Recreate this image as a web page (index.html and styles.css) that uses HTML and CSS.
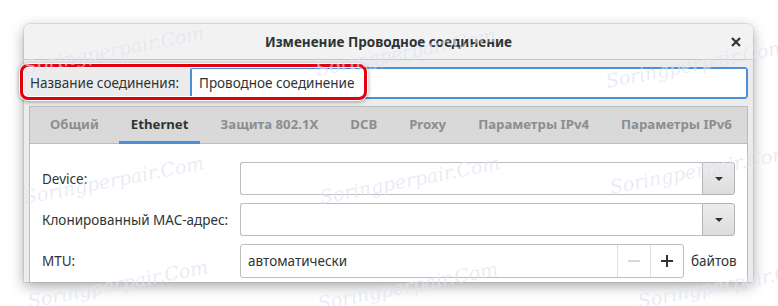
FILE: index.html
```html
<!DOCTYPE html>
<html lang="ru">
<head>
    <meta charset="UTF-8">
    <title>Изменение Проводное соединение</title>
    <link rel="stylesheet" href="styles.css">
</head>
<body>
    <div class="stage">
        <div class="window">
            <div class="titlebar">
                <span class="title">Изменение Проводное соединение</span>
                <span class="close">
                    <svg width="10" height="10" viewBox="0 0 10 10"><path d="M1 1L9 9M9 1L1 9" stroke="#2e3436" stroke-width="2.2"/></svg>
                </span>
            </div>
            <div class="name-row">
                <label class="name-label">Название соединения:</label>
                <div class="name-input">Проводное соединение</div>
            </div>
            <div class="notebook">
                <div class="tabs">
                    <span class="tab">Общий</span>
                    <span class="tab active">Ethernet</span>
                    <span class="tab">Защита 802.1X</span>
                    <span class="tab">DCB</span>
                    <span class="tab">Proxy</span>
                    <span class="tab">Параметры IPv4</span>
                    <span class="tab">Параметры IPv6</span>
                </div>
                <div class="page">
                    <div class="row">
                        <span class="label">Device:</span>
                        <div class="combo">
                            <div class="combo-entry"></div>
                            <div class="combo-btn"><span class="arrow"></span></div>
                        </div>
                    </div>
                    <div class="row">
                        <span class="label">Клонированный MAC-адрес:</span>
                        <div class="combo">
                            <div class="combo-entry"></div>
                            <div class="combo-btn"><span class="arrow"></span></div>
                        </div>
                    </div>
                    <div class="row">
                        <span class="label">MTU:</span>
                        <div class="mtu">
                            <div class="spin">
                                <span class="spin-text">автоматически</span>
                                <span class="spin-btn minus">
                                    <svg width="12" height="12" viewBox="0 0 12 12"><path d="M0 6H12" stroke="#d0d0d0" stroke-width="1.6"/></svg>
                                </span>
                                <span class="spin-btn plus">
                                    <svg width="12" height="12" viewBox="0 0 12 12"><path d="M0 6H12M6 0V12" stroke="#2e3436" stroke-width="2"/></svg>
                                </span>
                            </div>
                            <span class="unit">байтов</span>
                        </div>
                    </div>
                </div>
            </div>
        </div>

        <div class="highlight"></div>

        <span class="wm" style="left: 26px; top: 56px;">Soringperpair.Com</span>
        <span class="wm" style="left: 318px; top: 58px;">Soringperpair.Com</span>
        <span class="wm" style="left: 608px; top: 70px;">Soringperpair.Com</span>
        <span class="wm" style="left: 26px; top: 186px;">Soringperpair.Com</span>
        <span class="wm" style="left: 322px; top: 186px;">Soringperpair.Com</span>
        <span class="wm" style="left: 612px; top: 176px;">Soringperpair.Com</span>
        <span class="wm" style="left: 30px; top: 290px;">Soringperpair.Com</span>
        <span class="wm" style="left: 320px; top: 292px;">Soringperpair.Com</span>
        <span class="wm" style="left: 640px; top: 290px;">Soringperpair.Com</span>
    </div>
</body>
</html>
```

FILE: styles.css
```css
body {
    margin: 0;
    background: #ffffff;
    font-family: "Noto Sans", "Open Sans", sans-serif;
    font-size: 13.5px;
    color: #2e3436;
}

.stage {
    position: relative;
    width: 778px;
    height: 306px;
    overflow: hidden;
    padding: 24px 0 0 24px;
    box-sizing: border-box;
}

.window {
    width: 729px;
    height: 258px;
    background: #ececec;
    box-shadow: 0 4px 14px rgba(0, 0, 0, 0.35), 0 0 0 1px rgba(0, 0, 0, 0.08);
    border-radius: 6px 6px 0 0;
    overflow: hidden;
    display: flex;
    flex-direction: column;
}

.titlebar {
    height: 35px;
    flex: none;
    background: #f2f2f2;
    border-bottom: 1px solid #c4c4c4;
    display: flex;
    align-items: center;
    justify-content: center;
    position: relative;
}

.title {
    font-weight: bold;
    margin-top: 1px;
}

.close {
    position: absolute;
    right: 12px;
    top: 13px;
    display: flex;
}

.name-row {
    display: flex;
    align-items: center;
    padding: 7px 5px 0 6px;
    height: 32px;
    flex: none;
}

.name-label {
    width: 160px;
    flex: none;
}

.name-input {
    flex: 1;
    height: 30px;
    line-height: 30px;
    border: 1px solid #4a90d9;
    box-shadow: inset 0 0 0 1px #4a90d9;
    border-radius: 3px;
    background: #ffffff;
    padding-left: 8px;
}

.notebook {
    margin: 7px 5px 0 5px;
    border: 1px solid #bcbcbc;
    border-bottom: none;
    flex: 1;
    display: flex;
    flex-direction: column;
    background: #ffffff;
}

.tabs {
    height: 36px;
    flex: none;
    display: flex;
    gap: 8px;
    padding-left: 8px;
    background: #d9d9d9;
    border-bottom: 1px solid #bcbcbc;
}

.tab {
    flex: none;
    white-space: nowrap;
    padding: 0 12px;
    line-height: 35px;
    font-size: 13.2px;
    color: #8b8e8f;
    font-weight: bold;
    border-bottom: 3px solid transparent;
    margin-bottom: -1px;
}

.tab.active {
    color: #2e3436;
    border-bottom-color: #4a90d9;
}

.page {
    padding: 18px 12px 0 12px;
    display: flex;
    flex-direction: column;
    gap: 8px;
}

.row {
    display: grid;
    grid-template-columns: 198px 1fr;
    align-items: center;
}

.combo {
    display: flex;
    height: 33px;
}

.combo-entry {
    flex: 1;
    border: 1px solid #bdbdbd;
    border-right: none;
    border-radius: 3px 0 0 3px;
    background: #ffffff;
}

.combo-btn {
    width: 31px;
    border: 1px solid #b4b4b4;
    border-radius: 0 3px 3px 0;
    background: linear-gradient(#ededed, #dcdcdc);
    display: flex;
    align-items: center;
    justify-content: center;
}

.arrow {
    width: 0;
    height: 0;
    border-left: 4px solid transparent;
    border-right: 4px solid transparent;
    border-top: 4px solid #2e3436;
}

.mtu {
    display: flex;
    align-items: center;
    gap: 7px;
}

.spin {
    flex: 1;
    height: 32px;
    display: flex;
    align-items: center;
    border: 1px solid #bdbdbd;
    border-radius: 3px;
    background: #ffffff;
}

.spin-text {
    flex: 1;
    padding-left: 7px;
}

.spin-btn {
    width: 32px;
    height: 32px;
    border-left: 1px solid #e0e0e0;
    display: flex;
    align-items: center;
    justify-content: center;
}

.unit {
    width: 44px;
    white-space: nowrap;
}

.highlight {
    position: absolute;
    left: 20px;
    top: 64px;
    width: 341px;
    height: 30px;
    border: 3px solid #e2000f;
    border-radius: 8px;
    box-shadow: 0 0 0 1px #ffffff, 0 1px 4px 1px rgba(0, 0, 0, 0.35), inset 0 0 0 1px #ffffff;
}

.wm {
    position: absolute;
    font-family: "DejaVu Serif", serif;
    font-style: italic;
    font-size: 19px;
    color: rgba(175, 185, 220, 0.28);
    text-shadow: 0 0 1px rgba(255, 255, 255, 0.6);
    transform: rotate(-11deg);
    transform-origin: left bottom;
    pointer-events: none;
    white-space: nowrap;
}
```
